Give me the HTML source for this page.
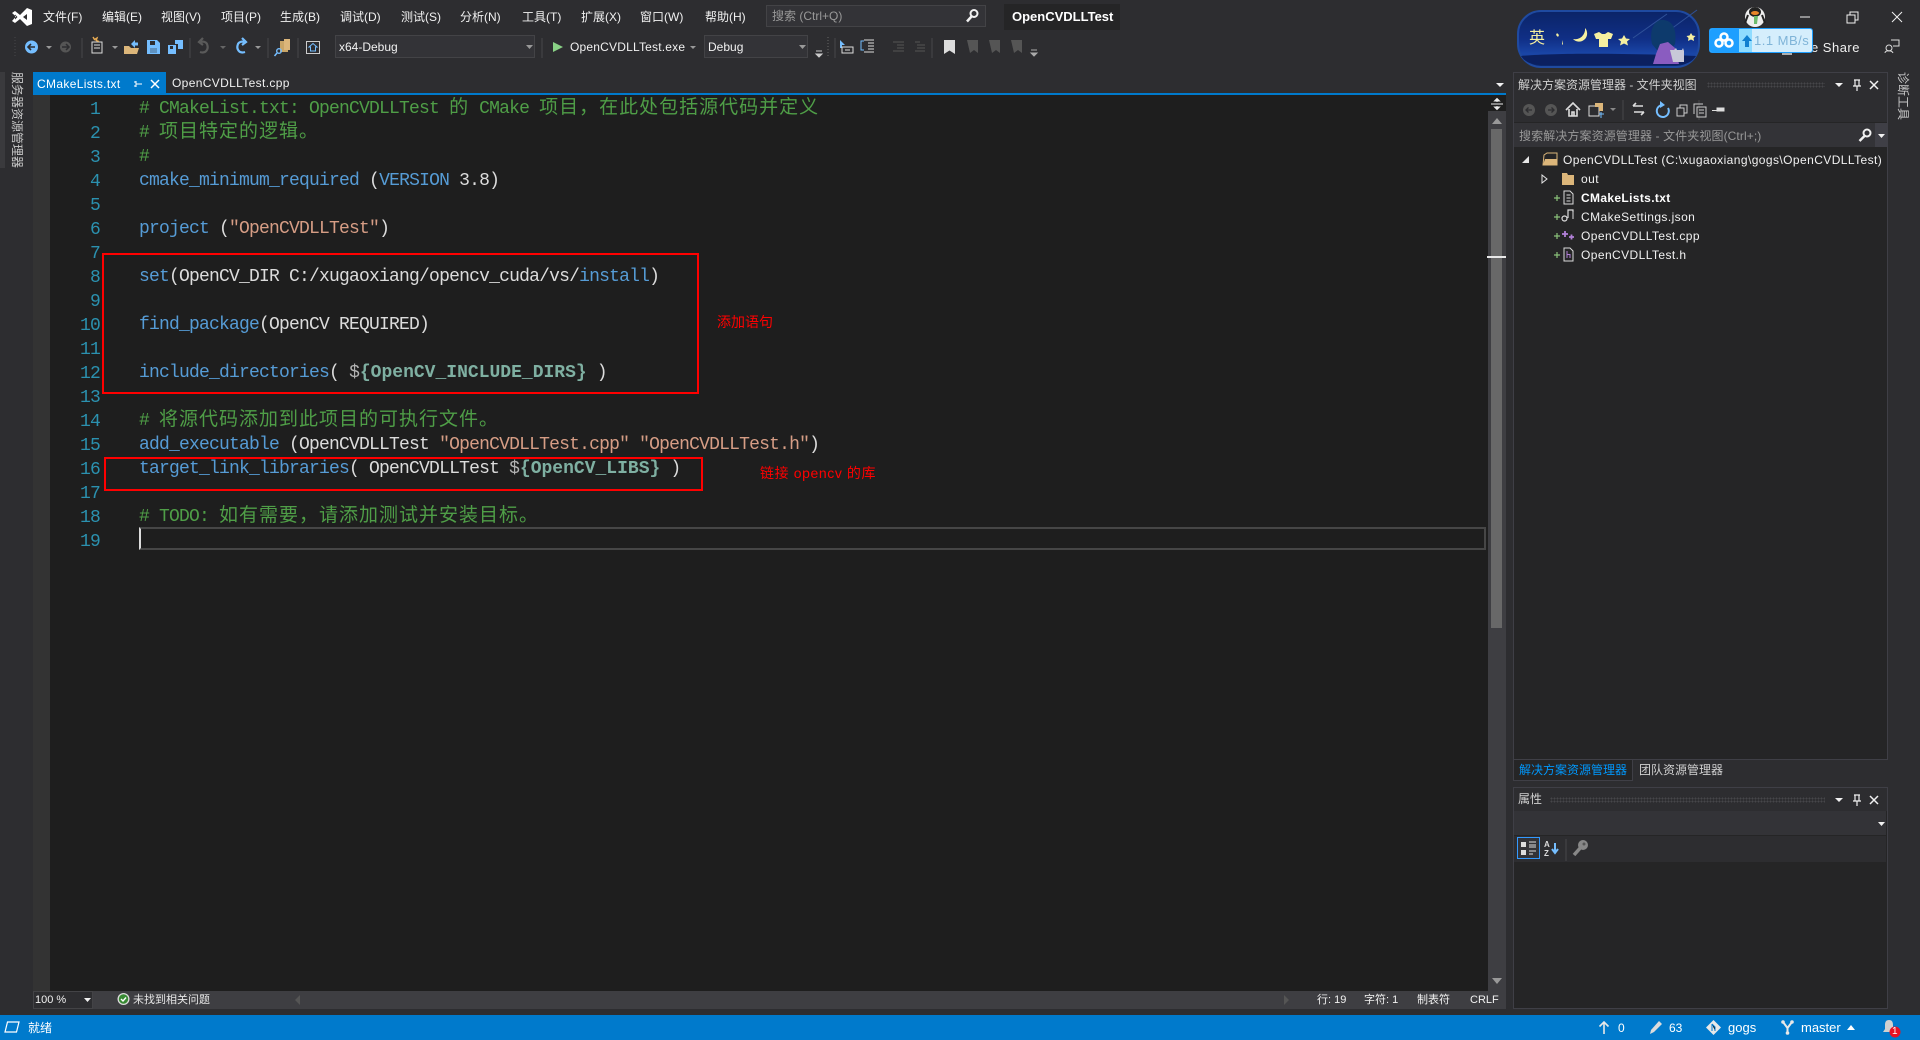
<!DOCTYPE html>
<html lang="zh"><head><meta charset="utf-8"><title>OpenCVDLLTest</title>
<style>
*{box-sizing:border-box}
html,body{margin:0;padding:0;width:1920px;height:1040px;overflow:hidden;background:#2d2d30}
body{position:relative;font:12px/16px "Liberation Sans","Noto Sans CJK SC",sans-serif;color:#f1f1f1}
.a{position:absolute;white-space:nowrap}
.b{position:absolute}
svg{position:absolute;overflow:visible}
#code{position:absolute;left:139px;top:97px;font:18px/24px "Liberation Mono","Noto Sans CJK SC",monospace;letter-spacing:-.8px;color:#dcdcdc}
#code div{height:24px;white-space:pre}
#code i{font:19px/0 "Noto Sans CJK SC",sans-serif;letter-spacing:1px;font-style:normal}
#nums{position:absolute;left:60px;width:40px;top:98px;text-align:right;font:18px/24px "Liberation Mono",monospace;letter-spacing:-.8px;color:#2b91af}
#nums div{height:24px}
.g{color:#4f9e47}.k{color:#569cd6}.s{color:#d69d85}
#code .v{color:#7fb0a2;font-weight:bold;letter-spacing:0}
#code .d{color:#b4b4b4;letter-spacing:0}
.red{position:absolute;border:2px solid #f00}
.tree{color:#f1f1f1;font-size:12px;letter-spacing:.42px}
.w{color:#fff}
.sm{font-size:11px}
.vt{writing-mode:vertical-rl;text-orientation:sideways;color:#c8c8c8;line-height:16px}
</style></head><body>

<!-- Title bar -->
<svg style="left:11px;top:6px" width="22" height="22" viewBox="0 0 22 22"><path d="M1 7l3-2 5 4 7-7 5 2v14l-5 2-7-7-5 4-3-2 4-4.500zM4 8.500v5l2.500-2.500zM12 11l4 3V8z" fill="#fff"/></svg>
<span class="a" style="left:43px;top:9px">文件(F)</span>
<span class="a" style="left:102px;top:9px">编辑(E)</span>
<span class="a" style="left:161px;top:9px">视图(V)</span>
<span class="a" style="left:221px;top:9px">项目(P)</span>
<span class="a" style="left:280px;top:9px">生成(B)</span>
<span class="a" style="left:340px;top:9px">调试(D)</span>
<span class="a" style="left:401px;top:9px">测试(S)</span>
<span class="a" style="left:460px;top:9px">分析(N)</span>
<span class="a" style="left:522px;top:9px">工具(T)</span>
<span class="a" style="left:581px;top:9px">扩展(X)</span>
<span class="a" style="left:640px;top:9px">窗口(W)</span>
<span class="a" style="left:705px;top:9px">帮助(H)</span>
<div class="b" style="left:766px;top:5px;width:220px;height:22px;background:#333337;border:1px solid #434346"></div>
<span class="a" style="left:772px;top:8px;color:#999">搜索 (Ctrl+Q)</span>
<svg style="left:965px;top:8px" width="14" height="15" viewBox="0 0 14 15"><circle cx="9" cy="5.500" r="3.500" fill="none" stroke="#f1f1f1" stroke-width="2"/><path d="M6.500 8.500L2 13.500" stroke="#f1f1f1" stroke-width="2.500"/></svg>
<div class="b" style="left:1004px;top:4px;width:116px;height:26px;background:#252526"></div>
<span class="a" style="left:1012px;top:9px;font-weight:bold;font-size:13px;color:#fff">OpenCVDLLTest</span>

<!-- Toolbar -->
<svg style="left:0;top:34px" width="1100" height="26" viewBox="0 0 1100 26">
<path d="M15 3v20" stroke="#46464a" stroke-dasharray="1 2"/>
<circle cx="31.500" cy="13" r="6.500" fill="#75beff"/><path d="M35 13h-7M31 10l-3 3 3 3" stroke="#2d2d30" stroke-width="1.600" fill="none"/>
<path d="M46 12l3 3 3-3z" fill="#999"/>
<circle cx="65.500" cy="13" r="5.500" fill="#555"/><path d="M62 13h7M66 10l3 3-3 3" stroke="#2d2d30" stroke-width="1.500" fill="none"/>
<path d="M82 4v20M190 4v20M268 4v20M298 4v20M542 4v20M835 4v20M932 4v20" stroke="#46464a"/>
<path d="M92 8h10v11H92zM94 11h6M94 14h6" fill="none" stroke="#ddd"/><path d="M93 3l1.500 2.500L97 4l-.800 2.500L99 7.500" fill="none" stroke="#e8ab53" stroke-width="1.400"/>
<path d="M112 12l3 3 3-3z" fill="#999"/>
<path d="M124 12h5l2 2h8l-2 6h-13z" fill="#dcb67a"/><path d="M131 10l4-4v2.500h3v3h-3V14z" fill="#75beff"/>
<path d="M147 6h10l3 3v11h-13z" fill="#75beff"/><rect x="150" y="7" width="5" height="4" fill="#2d2d30"/><rect x="150" y="14" width="7" height="5" fill="#2d2d30" opacity=".3"/>
<path d="M168 11h8v9h-8z" fill="#75beff"/><path d="M175 6h8v9h-5v-5h-3z" fill="#75beff"/><rect x="170" y="12" width="3" height="3" fill="#2d2d30"/>
<path d="M200 18c6 2 9-3 7-8-1-2-4-3-6-2M203 4l-4 4 4 3" fill="none" stroke="#5a5a5a" stroke-width="2.200"/>
<path d="M220 12l3 3 3-3z" fill="#666"/>
<path d="M245 18c-6 2-9-3-7-8 1-2 4-3 6-2M242 4l4 4-4 3" fill="none" stroke="#75beff" stroke-width="2.200"/>
<path d="M255 12l3 3 3-3z" fill="#999"/>
<path d="M280 7h8v11h-8z" fill="#c9a567"/><path d="M284 5h6v11h-6z" fill="#dcb67a"/><circle cx="279" cy="17" r="2.300" fill="none" stroke="#75beff" stroke-width="1.400"/><path d="M277 19l-2.500 3" stroke="#75beff" stroke-width="1.500"/>
<rect x="306.500" y="7.500" width="13" height="12" fill="none" stroke="#ccc"/><path d="M313 9.500l-4 3.500h1.500v4h5v-4h1.500z" fill="none" stroke="#75beff"/>
<path d="M553 8l10 5-10 5z" fill="#89d185"/>
<path d="M690 12l3 3 3-3z" fill="#999"/>
<path d="M816 17h6M816 20h6l-3 3z" stroke="#ccc" fill="#ccc"/><path d="M828 3v20" stroke="#666" stroke-dasharray="1 2"/>
<path d="M840 6l5 5h-3v3h-2z" fill="#75beff"/><path d="M842 13h11v6h-11zM845 16h5" fill="none" stroke="#ddd"/>
<path d="M864 7h-3v9h3" stroke="#75beff" fill="none"/><path d="M864 6h10M868 9h6M868 12h6M868 15h6M864 18h10" stroke="#ddd"/>
<path d="M893 8h11M897 11h7M897 14h7M893 17h11" stroke="#555"/><path d="M915 8h5M917 11h8M917 14h8M915 17h10" stroke="#555"/>
<path d="M944 6h11v14l-5.500-3.500-5.500 3.500z" fill="#ddd"/>
<path d="M967 6h11v13l-4-3-4 3z" fill="#555"/><path d="M989 6h11v13l-4-3-4 3z" fill="#555"/><path d="M1011 6h11v13l-4-3-4 3z" fill="#555"/>
<path d="M1031 16h6M1031 19h6l-3 3z" stroke="#aaa" fill="#aaa"/>
</svg>
<div class="b" style="left:335px;top:35px;width:200px;height:23px;background:#333337;border:1px solid #434346"></div>
<span class="a" style="left:339px;top:39px">x64-Debug</span>
<svg style="left:526px;top:45px" width="8" height="5"><path d="M0 0h7L3.500 4z" fill="#999"/></svg>
<span class="a" style="left:570px;top:39px;letter-spacing:.2px">OpenCVDLLTest.exe</span>
<div class="b" style="left:704px;top:35px;width:104px;height:23px;background:#333337;border:1px solid #434346"></div>
<span class="a" style="left:708px;top:39px">Debug</span>
<svg style="left:799px;top:45px" width="8" height="5"><path d="M0 0h7L3.500 4z" fill="#999"/></svg>

<!-- Left rail -->
<div class="b" style="left:0;top:72px;width:5px;height:96px;background:#3a3a3d"></div>
<span class="a vt" style="left:9px;top:72px">服务器资源管理器</span>

<!-- Tab strip -->
<div class="b" style="left:33px;top:72px;width:133px;height:21px;background:#007acc"></div>
<span class="a w" style="left:37px;top:76px;letter-spacing:.35px">CMakeLists.txt</span>
<svg style="left:133px;top:79px" width="10" height="10"><path d="M3 2v6M3 5h6M1 3h2M1 7h2" stroke="#fff" fill="none"/></svg>
<svg style="left:150px;top:79px" width="10" height="10"><path d="M1 1l8 8M9 1l-8 8" stroke="#fff" stroke-width="1.500"/></svg>
<span class="a" style="left:172px;top:75px;letter-spacing:.35px">OpenCVDLLTest.cpp</span>
<svg style="left:1496px;top:83px" width="8" height="5"><path d="M0 0h8L4 4z" fill="#f1f1f1"/></svg>
<div class="b" style="left:33px;top:93px;width:1473px;height:2px;background:#007acc"></div>

<!-- Editor -->
<div class="b" style="left:33px;top:95px;width:17px;height:896px;background:#333333"></div>
<div class="b" style="left:50px;top:95px;width:1438px;height:896px;background:#1e1e1e"></div>

<div class="b" style="left:139px;top:527px;width:1347px;height:23px;border:2px solid #464646;border-left:2px solid #dcdcdc"></div>

<div id="nums"><div>1</div><div>2</div><div>3</div><div>4</div><div>5</div><div>6</div><div>7</div><div>8</div><div>9</div><div>10</div><div>11</div><div>12</div><div>13</div><div>14</div><div>15</div><div>16</div><div>17</div><div>18</div><div>19</div></div>

<div id="code">
<div class="g"># CMakeList.txt: OpenCVDLLTest <i>的</i> CMake <i>项目，在此处包括源代码并定义</i></div>
<div class="g"># <i>项目特定的逻辑。</i></div>
<div class="g">#</div>
<div><span class="k">cmake_minimum_required</span> (<span class="k">VERSION</span> 3.8)</div>
<div></div>
<div><span class="k">project</span> (<span class="s">"OpenCVDLLTest"</span>)</div>
<div></div>
<div><span class="k">set</span>(OpenCV_DIR C:/xugaoxiang/opencv_cuda/vs/<span class="k">install</span>)</div>
<div></div>
<div><span class="k">find_package</span>(OpenCV REQUIRED)</div>
<div></div>
<div><span class="k">include_directories</span>( <span class="d">$</span><span class="v">{OpenCV_INCLUDE_DIRS}</span> )</div>
<div></div>
<div class="g"># <i>将源代码添加到此项目的可执行文件。</i></div>
<div><span class="k">add_executable</span> (OpenCVDLLTest <span class="s">"OpenCVDLLTest.cpp"</span> <span class="s">"OpenCVDLLTest.h"</span>)</div>
<div><span class="k">target_link_libraries</span>( OpenCVDLLTest <span class="d">$</span><span class="v">{OpenCV_LIBS}</span> )</div>
<div></div>
<div class="g"># TODO: <i>如有需要，请添加测试并安装目标。</i></div>
</div>

<div class="red" style="left:102px;top:253px;width:597px;height:141px"></div>
<div class="red" style="left:104px;top:457px;width:599px;height:34px"></div>
<span class="a" style="left:717px;top:314px;font-size:14px;color:#f00">添加语句</span>
<span class="a" style="left:760px;top:465px;font-size:14px;letter-spacing:.6px;color:#f00">链接 opencv 的库</span>

<!-- Editor scrollbar -->
<div class="b" style="left:1488px;top:95px;width:18px;height:896px;background:#3e3e42"></div>
<div class="b" style="left:1488px;top:95px;width:18px;height:16px;background:#1e1e1e"></div>
<svg style="left:1491px;top:97px" width="12" height="14"><path d="M0 7h12M6 2v3M6 9v3M3.500 4h5L6 1.500zM3.500 10h5L6 12.500z" stroke="#eee" fill="#eee"/></svg>
<svg style="left:1492px;top:118px" width="10" height="6"><path d="M0 6h10L5 0z" fill="#999"/></svg>
<div class="b" style="left:1491px;top:129px;width:11px;height:499px;background:#686868"></div>
<div class="b" style="left:1487px;top:256px;width:19px;height:2px;background:#e8e8e8"></div>
<svg style="left:1492px;top:978px" width="10" height="6"><path d="M0 0h10L5 6z" fill="#999"/></svg>

<!-- Editor bottom bar -->
<div class="b" style="left:33px;top:991px;width:1473px;height:18px;background:#3e3e42"></div>
<div class="b" style="left:33px;top:991px;width:60px;height:18px;background:#2d2d30;border:1px solid #434346"></div>
<span class="a sm" style="left:35px;top:992px">100 %</span>
<svg style="left:84px;top:998px" width="7" height="4"><path d="M0 0h7L3.500 4z" fill="#f1f1f1"/></svg>
<svg style="left:117px;top:992px" width="13" height="15"><circle cx="6.500" cy="7" r="6" fill="#dcdcdc"/><circle cx="6.500" cy="7" r="4.700" fill="#388a34"/><path d="M4 7l2 2 3-3.500" stroke="#fff" stroke-width="1.400" fill="none"/></svg>
<span class="a sm" style="left:133px;top:992px;color:#e6e6e6">未找到相关问题</span>
<svg style="left:295px;top:995px" width="5" height="10"><path d="M5 0v10L0 5z" fill="#555"/></svg>
<svg style="left:1284px;top:995px" width="5" height="10"><path d="M0 0v10l5-5z" fill="#555"/></svg>
<span class="a sm" style="left:1317px;top:992px">行: 19</span>
<span class="a sm" style="left:1364px;top:992px">字符: 1</span>
<span class="a sm" style="left:1417px;top:992px">制表符</span>
<span class="a sm" style="left:1470px;top:992px">CRLF</span>

<!-- Solution explorer -->
<div class="b" style="left:1513px;top:72px;width:375px;height:688px;background:#252526;border:1px solid #3f3f46"></div>
<div class="b" style="left:1514px;top:73px;width:373px;height:24px;background:#2d2d30"></div>
<span class="a" style="left:1518px;top:77px;color:#d0d0d0">解决方案资源管理器 - 文件夹视图</span>
<div class="b" style="left:1707px;top:82px;width:118px;height:6px;background-image:radial-gradient(#46464a 40%,transparent 45%);background-size:3px 3px"></div>
<svg style="left:1835px;top:80px" width="50" height="12"><path d="M0 3h8L4 7z" fill="#f1f1f1"/><path d="M19 0h6M20 0v6h4V0M18 6h8M22 6v5" stroke="#f1f1f1" fill="none" stroke-width="1.200"/><path d="M35 1l8 8M43 1l-8 8" stroke="#f1f1f1" stroke-width="1.500"/></svg>
<div class="b" style="left:1514px;top:97px;width:373px;height:25px;background:#2d2d30"></div>
<svg style="left:1520px;top:98px" width="250" height="24" viewBox="0 0 250 24">
<circle cx="9" cy="12" r="6" fill="#555"/><path d="M6 12h6M8.500 9.500L6 12l2.500 2.500" stroke="#2d2d30" stroke-width="1.300" fill="none"/>
<circle cx="31" cy="12" r="6" fill="#555"/><path d="M28 12h6M31.500 9.500L34 12l-2.500 2.500" stroke="#2d2d30" stroke-width="1.300" fill="none"/>
<path d="M46 12l7-7 7 7M49 11v7h8v-7M52 18v-4h2v4" stroke="#ddd" fill="none" stroke-width="1.600"/>
<path d="M69 8h10v10H69z" fill="none" stroke="#ddd"/><path d="M75 5h8v8h-4V9h-4z" fill="#dcb67a"/><path d="M79 16h5M81 14v6" stroke="#75beff"/>
<path d="M90 10l3 3 3-3z" fill="#888"/>
<path d="M103 2v20M179 2v20" stroke="#46464a"/>
<path d="M113 8h10M113 8l3-3M124 14h-10M124 14l-3 3" stroke="#ddd" stroke-width="1.600" fill="none"/>
<path d="M143 7a6 6 0 1 0 5 3" stroke="#75beff" stroke-width="2" fill="none"/><path d="M140 3l5 4-5 3z" fill="#75beff"/>
<rect x="157" y="10" width="7" height="8" fill="none" stroke="#ccc"/><path d="M160 10V7h7v8h-3" fill="none" stroke="#ccc"/>
<rect x="177" y="9" width="9" height="10" fill="none" stroke="#ccc"/><path d="M174 16V6h9M179 12h5M179 15h5" fill="none" stroke="#ccc"/>
<path d="M192 12.500h8M197 10h7v3h-7z" fill="#ddd" stroke="#ddd"/>
</svg>
<div class="b" style="left:1514px;top:123px;width:373px;height:24px;background:#333337"></div>
<span class="a" style="left:1519px;top:128px;color:#999;letter-spacing:.1px">搜索解决方案资源管理器 - 文件夹视图(Ctrl+;)</span>
<div class="b" style="left:1875px;top:123px;width:12px;height:24px;background:#3f3f46"></div>
<svg style="left:1858px;top:128px" width="14" height="14"><circle cx="9" cy="5" r="3.500" fill="none" stroke="#f1f1f1" stroke-width="2"/><path d="M6.500 8L1.500 13" stroke="#f1f1f1" stroke-width="2.500"/></svg>
<svg style="left:1878px;top:134px" width="7" height="4"><path d="M0 0h7L3.500 4z" fill="#f1f1f1"/></svg>

<svg style="left:1520px;top:150px" width="80" height="115" viewBox="0 0 80 115">
<path d="M9 6v7H2z" fill="#e6e6e6"/>
<path d="M24 5l3-2h10v12H23z" fill="none" stroke="#dcb67a"/><path d="M25 9h12v6H23z" fill="#dcb67a"/>
<path d="M22 25l5 4-5 4z" fill="none" stroke="#e6e6e6"/>
<path d="M42 23h5l1 2h6v10H42z" fill="#dcb67a"/>
<g stroke="#8ac27a" stroke-width="1.200"><path d="M34 48h6M37 45v6M34 67h6M37 64v6M34 86h6M37 83v6M34 105h6M37 102v6"/></g>
<path d="M44 41h6l3 3v10h-9zM46.500 45h4M46.500 48h4M46.500 51h4" fill="none" stroke="#dcdcdc"/>
<path d="M53 62v-2h-5v8" fill="none" stroke="#dcdcdc" stroke-width="1.200"/><circle cx="44.500" cy="68.500" r="2.500" fill="none" stroke="#dcdcdc" stroke-width="1.200"/><path d="M50 60h3v9" stroke="#dcdcdc" fill="none"/>
<path d="M42 84h6M45 81v6M49 87h5M51.500 84.500v5" stroke="#b180d7" stroke-width="1.800"/>
<path d="M44 98h6l3 3v10h-9z" fill="none" stroke="#dcdcdc"/><path d="M47 101v7M47 104.500h3v3.500" fill="none" stroke="#b180d7"/>
</svg>
<span class="a tree" style="left:1563px;top:152px">OpenCVDLLTest (C:\xugaoxiang\gogs\OpenCVDLLTest)</span>
<span class="a tree" style="left:1581px;top:171px">out</span>
<span class="a tree" style="left:1581px;top:190px;font-weight:bold;color:#fff;letter-spacing:.35px">CMakeLists.txt</span>
<span class="a tree" style="left:1581px;top:209px">CMakeSettings.json</span>
<span class="a tree" style="left:1581px;top:228px">OpenCVDLLTest.cpp</span>
<span class="a tree" style="left:1581px;top:247px">OpenCVDLLTest.h</span>

<!-- Panel tabs -->
<div class="b" style="left:1513px;top:760px;width:120px;height:21px;background:#252526;border:1px solid #3f3f46;border-top:0"></div>
<span class="a" style="left:1519px;top:762px;color:#0097fb">解决方案资源管理器</span>
<span class="a" style="left:1639px;top:762px;color:#d0d0d0">团队资源管理器</span>

<!-- Properties -->
<div class="b" style="left:1513px;top:787px;width:375px;height:222px;background:#252526;border:1px solid #3f3f46"></div>
<div class="b" style="left:1514px;top:788px;width:373px;height:23px;background:#2d2d30"></div>
<span class="a" style="left:1518px;top:791px;color:#d0d0d0">属性</span>
<div class="b" style="left:1550px;top:797px;width:275px;height:6px;background-image:radial-gradient(#46464a 40%,transparent 45%);background-size:3px 3px"></div>
<svg style="left:1835px;top:795px" width="50" height="12"><path d="M0 3h8L4 7z" fill="#f1f1f1"/><path d="M19 0h6M20 0v6h4V0M18 6h8M22 6v5" stroke="#f1f1f1" fill="none" stroke-width="1.200"/><path d="M35 1l8 8M43 1l-8 8" stroke="#f1f1f1" stroke-width="1.500"/></svg>
<div class="b" style="left:1514px;top:811px;width:372px;height:24px;background:#333337"></div>
<svg style="left:1878px;top:822px" width="7" height="4"><path d="M0 0h7L3.500 4z" fill="#f1f1f1"/></svg>
<div class="b" style="left:1514px;top:836px;width:372px;height:26px;background:#2d2d30"></div>
<div class="b" style="left:1517px;top:837px;width:23px;height:22px;border:1px solid #3399ff;background:#333337"></div>
<svg style="left:1520px;top:840px" width="70" height="18" viewBox="0 0 70 18">
<path d="M1 2h5v5H1zM1 10h5v5H1z" fill="#ddd"/><path d="M9 2h7M9 5h7M9 7h7M9 11h7M9 14h4" stroke="#ddd"/>
<text x="24" y="7" font-size="8" font-weight="bold" fill="#ddd" font-family="Liberation Sans">A</text><text x="24" y="16" font-size="8" font-weight="bold" fill="#ddd" font-family="Liberation Sans">Z</text>
<path d="M35 3v10M32 9l3 4 3-4" stroke="#75beff" stroke-width="2" fill="none"/>
<path d="M46 -1v22" stroke="#46464a"/>
<path d="M62 6l-8 9" stroke="#888" stroke-width="3.500"/><circle cx="63" cy="5" r="5" fill="#888"/><circle cx="64" cy="4" r="1.500" fill="#555"/>
</svg>

<!-- Right rail -->
<span class="a vt" style="left:1895px;top:72px">诊断工具</span>

<!-- Widget: picture -->
<div class="b" style="left:1517px;top:10px;width:183px;height:58px;border-radius:24px;background:linear-gradient(180deg,#0b2468 0%,#102f86 50%,#1a46a8 78%,#0c2668 100%);border:2px solid #1f4aa0"></div>
<svg style="left:1517px;top:10px" width="183" height="58" viewBox="0 0 183 58">
<path d="M4 46c40-4 130-2 175 0-4 6-10 9-20 9H25C14 55 8 52 4 46z" fill="#0b2060"/>
<path d="M116 28L150 4M150 22l30-22" stroke="#2f5199" stroke-width="1"/>
<path d="M135 34c-3-14 2-25 12-24 9 1 13 10 11 24l-4 6h-14z" fill="#0d3a6c"/>
<path d="M143 34l8-2 7 6 4 16h-26l3-10z" fill="#8a5cc0"/>
<path d="M153 40h4l2-2 1 2h5l1-2 1 3v11h-11z" fill="#c8c8d8"/>
<path d="M68 18a8 8 0 0 1-12 11 10 10 0 0 0 12-11z" fill="#f6f0a0"/>
<path d="M77 24l5-2 3 2 3 0 3-2 5 2-2 5h-3v8H82v-8h-3z" fill="#f6f0a0"/>
<path d="M107 25l2 3.500 4 .500-3 2.500 1 4-4-2-4 2 1-4-3-2.500 4-.500z" fill="#f6f0a0"/>
<path d="M174 23l1.500 2.500 3 .500-2 2 .500 3-3-1.500-3 1.500 .500-3-2-2 3-.500z" fill="#f6f0a0"/>
<path d="M40 23l2 2-1 2-2-2zM45 30l1 4-1 1z" fill="#f6f0a0"/>
</svg>
<span class="a" style="left:1529px;top:29px;font-size:16px;line-height:20px;color:#f6f0a0">英</span>

<!-- Window controls -->
<svg style="left:1800px;top:10px" width="110" height="14"><path d="M0 7h10" stroke="#f1f1f1"/><path d="M47 5h8v8h-8zM50 5V2h8v8h-3" fill="none" stroke="#f1f1f1"/><path d="M92 2l10 10M102 2L92 12" stroke="#f1f1f1"/></svg>
<svg style="left:1742px;top:7px" width="26" height="20"><ellipse cx="13" cy="10" rx="10" ry="10" fill="#eee"/><ellipse cx="13" cy="5" rx="6" ry="5" fill="#222"/><ellipse cx="13" cy="6" rx="4" ry="2" fill="#e8862a"/><path d="M6 8l-3 8M20 8l3 8" stroke="#222" stroke-width="2"/><path d="M12 9h4l-1 8h-3z" fill="#6dbb6d"/></svg>
<div class="b" style="left:1782px;top:53px;width:10px;height:2px;background:#b0b0b0"></div>
<span class="a" style="left:1780px;right:60px;top:40px;font-size:13px;color:#f1f1f1;text-align:right;letter-spacing:.5px">Live Share</span>
<svg style="left:1884px;top:38px" width="16" height="16"><circle cx="5" cy="10" r="3" fill="none" stroke="#ddd"/><path d="M1 15c0-3 7-3 8 0M7 2h8v6H9" fill="none" stroke="#ddd"/></svg>

<!-- Widget: net speed -->
<div class="b" style="left:1709px;top:28px;width:104px;height:25px;border-radius:3px;background:#d5eefc;border:1px solid #1e9fff;overflow:hidden">
<div class="b" style="left:0;top:0;width:29px;height:25px;background:#1e9fff"></div>
<div class="b" style="left:29px;top:0;width:13px;height:25px;background:#8fdcff"></div></div>
<svg style="left:1714px;top:32px" width="20" height="16"><g fill="none" stroke="#fff" stroke-width="2.500"><circle cx="10" cy="5" r="3.500"/><circle cx="5" cy="11" r="3.500"/><circle cx="15" cy="11" r="3.500"/></g></svg>
<svg style="left:1741px;top:35px" width="12" height="12"><path d="M6 0l5 6H8v6H4V6H1z" fill="#0f7fd0"/></svg>
<span class="a" style="left:1754px;top:33px;font-size:13px;color:#7fb4d8;letter-spacing:.5px">1.1 MB/s</span>

<!-- Status bar -->
<div class="b" style="left:0;top:1015px;width:1920px;height:25px;background:#007acc"></div>
<svg style="left:4px;top:1021px" width="16" height="12"><path d="M3.500 1H15l-2.500 10H1z" fill="none" stroke="#fff" stroke-width="1.200"/></svg>
<span class="a w" style="left:28px;top:1020px">就绪</span>
<svg style="left:1598px;top:1021px" width="12" height="13"><path d="M6 1v12M1.500 5.500L6 1l4.500 4.500" stroke="#e8e8e8" stroke-width="1.600" fill="none"/></svg>
<span class="a w" style="left:1618px;top:1020px">0</span>
<svg style="left:1649px;top:1021px" width="13" height="13"><path d="M10 0l3 3-8 8-4 2 1-4z" fill="#dcdcdc"/></svg>
<span class="a w" style="left:1669px;top:1020px">63</span>
<svg style="left:1706px;top:1020px" width="15" height="15"><path d="M7.500 0L15 7.500 7.500 15 0 7.500z" fill="#e8e8e8"/><path d="M6 4l3 3v4M6 4v7" stroke="#007acc"/></svg>
<span class="a w" style="left:1728px;top:1020px;font-size:13px">gogs</span>
<svg style="left:1780px;top:1020px" width="15" height="15"><path d="M3 2l4.500 6v6M12 2L7.500 8" stroke="#e8e8e8" stroke-width="2" fill="none"/><circle cx="3" cy="2" r="1.800" fill="#e8e8e8"/><circle cx="12" cy="2" r="1.800" fill="#e8e8e8"/><circle cx="7.500" cy="13" r="1.800" fill="#e8e8e8"/></svg>
<span class="a w" style="left:1801px;top:1020px;font-size:13px">master</span>
<svg style="left:1847px;top:1025px" width="8" height="5"><path d="M0 5h8L4 0z" fill="#fff"/></svg>
<svg style="left:1881px;top:1019px" width="22" height="21"><path d="M8 1c3 0 4 2 4 5v4l2 3H2l2-3V6c0-3 1-5 4-5z" fill="#d0d0d0"/><circle cx="14" cy="13" r="5.500" fill="#e81123"/></svg>
<span class="a w" style="left:1892px;top:1024px;font-size:10px;line-height:16px">1</span>

</body></html>
